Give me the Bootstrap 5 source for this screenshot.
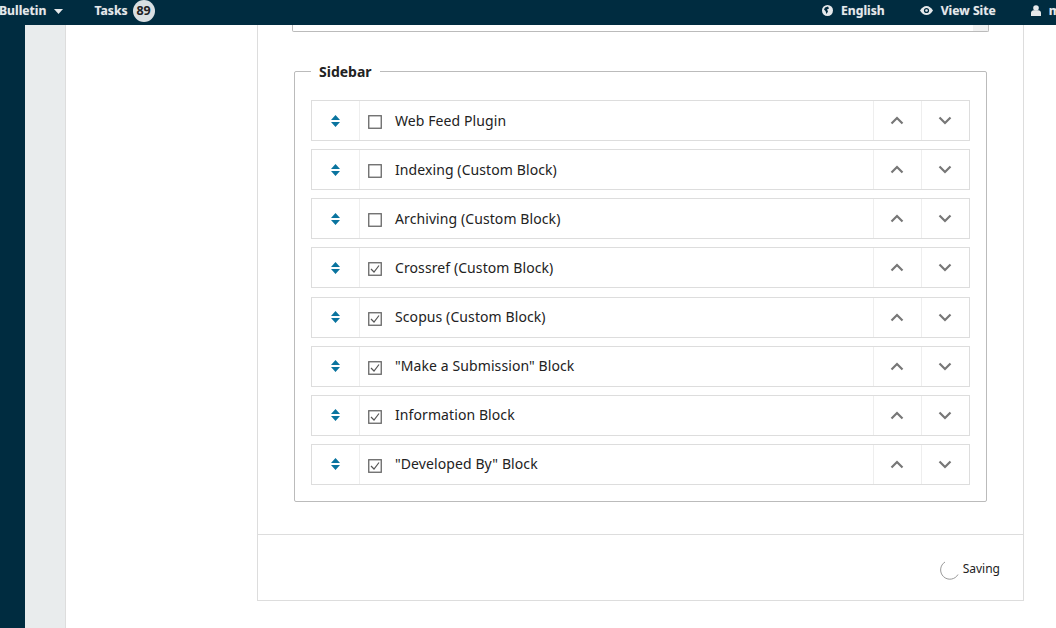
<!DOCTYPE html>
<html lang="en"><head><meta charset="utf-8"><title>Layout</title>
<link href="https://cdn.jsdelivr.net/npm/bootstrap@5.3.0/dist/css/bootstrap.min.css" rel="stylesheet">
<style>
html,body{height:628px;overflow:hidden}
body{font-family:"Noto Sans",sans-serif;font-size:14px;color:#222;background:#fff}
.topbar{height:25px;padding-bottom:3px;background:#002c40;color:#e6e9eb;font-size:12.2px;font-weight:700;white-space:nowrap;overflow:hidden;text-shadow:0 0 1px rgba(255,255,255,.3)}
.topbar svg{display:block}
.tl-start{margin-left:-1px}
.tl-tasks{margin-left:31px}
.tcount{width:22px;height:22px;border-radius:50%;background:#d9dfe2;color:#222;font-size:12.5px;line-height:22px;text-align:center;margin-left:5px;text-shadow:none}
.tcaret{margin-left:8px}
.tr-lang,.tr-site{margin-right:35px}
.tright{margin-right:-12px}
.shell{height:603px}
.rail{width:25px;background:#002c40}
.subrail{width:41px;background:#e9eced;border-right:1px solid #ddd}
.content{padding-left:191px;width:958px}
.pane{width:767px;height:576px;border:1px solid #ddd;border-top:0}
.pane-body{height:509px;padding:0 35px 0 34px}
.clipbox{width:697px;height:7px;border:1px solid #bbb;border-top:0;border-radius:0 0 2px 2px}
.clipbar{width:15px;background:#f1f1f1;height:6px}
.fs{width:693px;height:431px;margin:39px 0 0 2px;border:1px solid #bbb;border-radius:2px;padding:28px 16px 0}
.fs-title{font-size:14px;font-weight:700;margin:-38px 0 18px 0;padding:0 8px;background:#fff;display:table;line-height:20px;color:#222;position:relative}
.brow{height:41px;margin-bottom:8.15px;border:1px solid #ddd;width:659px}
.brow:last-child{margin-bottom:0}
.hcell{width:48px;border-right:1px solid #eee}
.lbl{padding-left:8px;gap:13px;flex:1;line-height:20px;letter-spacing:.09px}
.lbl svg{margin-top:3px}
.acell{width:48px;border-left:1px solid #eee}
.acell svg{margin-right:2px}
.pane-foot{height:66px;border-top:1px solid #ddd;padding:0 23px 0 0}
.saving{font-size:12px;gap:3px;margin-top:6px;color:#222}
</style></head><body>
<nav class="topbar d-flex justify-content-between align-items-center">
  <div class="d-flex align-items-center">
    <span class="tl-start">Bulletin</span>
    <svg class="tcaret" width="9" height="5" viewBox="0 0 9 5"><path d="M0 0h9L4.500 5z" fill="#e6e9eb"/></svg>
    <span class="tl-tasks">Tasks</span><span class="tcount">89</span>
  </div>
  <div class="tright d-flex align-items-center">
    <svg class="me-2" width="11" height="11" viewBox="0 0 11 11"><circle cx="5.500" cy="5.500" r="5.500" fill="#e6e9eb"/><path d="M3 2.500l3-1 1 2-2 1 1 2-1.500 2.500L3.500 6 2 4.500z" fill="#002c40"/></svg>
    <span class="tr-lang">English</span>
    <svg class="me-2" width="13" height="9" viewBox="0 0 13 9"><path d="M0 4.500C2 1.500 4 0 6.500 0S11 1.500 13 4.500C11 7.500 9 9 6.500 9S2 7.500 0 4.500z" fill="#e6e9eb"/><circle cx="6.500" cy="4.500" r="2.600" fill="#002c40"/><circle cx="6.500" cy="4.500" r="1.300" fill="#e6e9eb"/></svg>
    <span class="tr-site">View Site</span>
    <svg class="me-2" width="10" height="11" viewBox="0 0 10 11"><circle cx="5" cy="3" r="2.800" fill="#e6e9eb"/><path d="M0 11V8c0-2 1.500-2.800 2.500-2.800h5c1 0 2.500.8 2.500 2.800v3z" fill="#e6e9eb"/></svg>
    <span>me</span>
  </div>
</nav>
<div class="shell d-flex">
  <div class="rail"></div>
  <div class="subrail"></div>
  <main class="content">
    <section class="pane">
      <div class="pane-body">
        <div class="clipbox d-flex justify-content-end"><div class="clipbar"></div></div>
        <div class="fs">
          <div class="fs-title">Sidebar</div>
          <div id="rows"></div>
        </div>
      </div>
      <div class="pane-foot d-flex justify-content-end align-items-center">
        <div class="saving d-flex align-items-start">
          <svg width="21" height="21" viewBox="0 0 21 21"><path d="M6 2A9.300 9.300 0 1 0 19 14.500" fill="none" stroke="#999" stroke-width="1"/></svg>
          <span>Saving</span>
        </div>
      </div>
    </section>
  </main>
</div>
<script>
var items=[["Web Feed Plugin",0],["Indexing (Custom Block)",0],["Archiving (Custom Block)",0],["Crossref (Custom Block)",1],["Scopus (Custom Block)",1],["\"Make a Submission\" Block",1],["Information Block",1],["\"Developed By\" Block",1]];
var h="";
items.forEach(function(it){
 h+='<div class="brow d-flex align-items-stretch">'+
 '<div class="hcell d-flex align-items-center justify-content-center"><svg width="9" height="12" viewBox="0 0 9 12"><path d="M4.500 0L9 5H0zM0 7h9L4.500 12z" fill="#0a749f"/></svg></div>'+
 '<div class="lbl d-flex align-items-center"><svg width="14" height="14" viewBox="0 0 14 14"><rect x=".75" y=".75" width="12.500" height="12.500" fill="#fff" stroke="#666" stroke-width="1.300"/>'+(it[1]?'<path d="M3 7l3 3 5-6.500" fill="none" stroke="#555" stroke-width="1.200"/>':'')+'</svg><span></span></div>'+
 '<div class="acell d-flex align-items-center justify-content-center"><svg width="14" height="9" viewBox="0 0 14 9"><path d="M1.500 7.500L7 2l5.500 5.500" fill="none" stroke="#777" stroke-width="2.200"/></svg></div>'+
 '<div class="acell d-flex align-items-center justify-content-center"><svg width="14" height="9" viewBox="0 0 14 9"><path d="M1.500 1.500L7 7l5.500-5.500" fill="none" stroke="#777" stroke-width="2.200"/></svg></div></div>';
});
document.getElementById("rows").innerHTML=h;
document.querySelectorAll(".lbl span").forEach(function(s,i){s.textContent=items[i][0];});
</script>
<script src="https://cdn.jsdelivr.net/npm/bootstrap@5.3.0/dist/js/bootstrap.bundle.min.js"></script>
</body></html>
